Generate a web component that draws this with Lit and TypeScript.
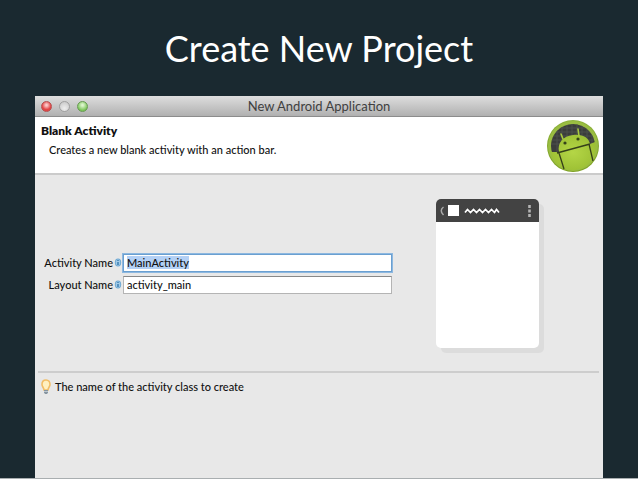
import { LitElement, html, css, svg } from "lit";
import { customElement, query } from "lit/decorators.js";

const androidLogo = svg`
  <defs>
    <linearGradient id="rim" x1="0" y1="0" x2="0" y2="1">
      <stop offset="0" stop-color="#8db23c"></stop>
      <stop offset="1" stop-color="#7ea022"></stop>
    </linearGradient>
    <radialGradient id="skin" cx="0.5" cy="0.5" r="0.6">
      <stop offset="0" stop-color="#b4d646"></stop>
      <stop offset="1" stop-color="#9abd32"></stop>
    </radialGradient>
    <clipPath id="disc"><circle cx="26" cy="26" r="22"></circle></clipPath>
  </defs>
  <circle cx="26" cy="26" r="26" fill="url(#rim)"></circle>
  <circle cx="26" cy="26" r="25" fill="#9abd42"></circle>
  <g clip-path="url(#disc)">
    <path d="M0 0H52V22L8 33H0Z" fill="#3b3d3b"></path>
    <path d="M2 12H50M2 16H50M2 20H50M2 24H50M2 8H50M10 2V34M15 2V34M20 2V34M25 2V34M30 2V34M35 2V34M40 2V34M45 2V34" stroke="#4d504c" stroke-width="1"></path>
  </g>
  <path d="M4 32L12 32C10 23 16 16 26 15C36 14 42 18 43 24L48 22C51 40 38 50 26 50C15 50 5 43 4 32Z" fill="url(#skin)"></path>
  <path d="M16 19L14 14M32 16L31 9" stroke="#a9cb3f" stroke-width="1.6" stroke-linecap="round"></path>
  <path d="M10 33L43 24M12 33L17 49M42 24L46 41" stroke="#35401a" stroke-width="1.3" fill="none"></path>
  <circle cx="18" cy="23" r="1.6" fill="#34421a"></circle>
  <circle cx="31" cy="19" r="1.6" fill="#34421a"></circle>
`;

@customElement("info-mark")
class InfoMark extends LitElement {
  static styles = css`
    :host { display: block; width: 8px; height: 9px; }
    svg { display: block; }
  `;
  render() {
    return html`<svg width="8" height="9" viewBox="0 0 8 9" aria-hidden="true">
      <ellipse cx="4" cy="4.5" rx="3.2" ry="4" fill="#6fa9d3"></ellipse>
      <ellipse cx="4" cy="4.5" rx="2.2" ry="3" fill="#a3cbe8"></ellipse>
      <path d="M4 2V3M4 4V7" stroke="#2c72a8" stroke-width="1.3"></path>
    </svg>`;
  }
}

@customElement("phone-preview")
class PhonePreview extends LitElement {
  static styles = css`
    :host {
      display: block;
      width: 103px;
      height: 149px;
      background: #fff;
      border-radius: 5px;
      box-shadow: 5px 5px 0 #dcdcdc;
    }
    .bar {
      display: block;
      width: 103px;
      height: 23px;
      background: #434343;
      border-radius: 5px 5px 0 0;
    }
  `;
  render() {
    return html`<svg class="bar" viewBox="0 0 103 23" aria-hidden="true">
      <path d="M7.5 8C4.5 10 4.5 13 7.5 16" stroke="#aaa" stroke-width="1.5" fill="none"></path>
      <rect x="12" y="6" width="11" height="11" fill="#fff"></rect>
      <path d="M29 13.5L31.5 10.5L34.5 13.5L37.5 10.5L40.5 13.5L43.5 10.5L46.5 13.5L49.5 10.5L52.5 13.5L55.5 10.5L58.5 13.5L60.5 10.5L63 13.5" stroke="#fff" stroke-width="1.7" fill="none"></path>
      <path d="M93.5 6V9M93.5 10.5V13.5M93.5 15V18" stroke="#b5b5b5" stroke-width="2.6"></path>
    </svg>`;
  }
}

@customElement("app-root")
class AppRoot extends LitElement {
  @query("#activity") activity!: HTMLInputElement;

  static styles = css`
    :host {
      display: flex;
      flex-direction: column;
      box-sizing: border-box;
      min-height: 100vh;
      background: #1a2930;
      border-bottom: 1px solid #a9aeb0;
      font-family: "Lato", sans-serif;
      font-size: 11px;
      line-height: 16px;
      font-weight: 500;
      color: #111;
    }
    .slide-title {
      margin: 0;
      padding: 24px 0;
      font-size: 36px;
      line-height: 48px;
      font-weight: 400;
      text-align: center;
      color: #fff;
    }
    .window {
      flex: 1;
      display: flex;
      flex-direction: column;
      margin: 0 35px;
      background: #e8e8e8;
    }
    .titlebar {
      display: grid;
      grid-template-columns: 1fr auto 1fr;
      align-items: center;
      height: 21px;
      box-sizing: border-box;
      padding: 0 6px;
      background: linear-gradient(#dedede, #b0b0b0);
      border-bottom: 1px solid #8c8c8c;
    }
    .lights { display: flex; gap: 7px; }
    .light {
      width: 11px;
      height: 11px;
      padding: 0;
      box-sizing: border-box;
      border: 1px solid;
      border-radius: 50%;
    }
    .close { border-color: #b45050; background: radial-gradient(circle at 50% 35%, #fbc8c8 10%, #e24444 60%); }
    .minimize { border-color: #a0a0a0; background: radial-gradient(circle at 50% 70%, #eee, #c4c4c4); }
    .zoom { border-color: #679a52; background: radial-gradient(circle at 50% 35%, #dcf5cc 10%, #7ac458 70%); }
    .window-title { margin: 0; font-size: 13px; font-weight: 400; color: #404040; }
    .header {
      display: flex;
      justify-content: space-between;
      align-items: flex-start;
      height: 58px;
      box-sizing: border-box;
      padding: 3px 4px 0 6px;
      background: #fff;
      border-bottom: 2px solid #cbcbcb;
    }
    .heading { margin: 3px 0; font-size: 12px; line-height: 16px; font-weight: 800; color: #111; }
    .intro { margin: 0; padding-left: 8px; }
    .logo { display: block; width: 52px; height: 52px; }
    .content {
      display: flex;
      justify-content: space-between;
      align-items: center;
      gap: 44px;
      padding: 24px 64px 23px 8px;
    }
    .form {
      flex: 1;
      display: grid;
      grid-template-columns: 70px 8px 1fr;
      align-items: center;
      column-gap: 1px;
      row-gap: 4px;
      margin: 0;
    }
    label { text-align: right; }
    input {
      width: 100%;
      height: 18px;
      min-width: 0;
      box-sizing: border-box;
      padding: 0 3px;
      border: 1px solid #b4b4b4;
      border-top-color: #888;
      border-radius: 0;
      background: #fff;
      color: #111;
      font: inherit;
      outline: none;
    }
    input.active {
      border-color: #6a9fd0;
      box-shadow: 0 0 0 1px #8db8e0;
    }
    input::selection { background: #b3d0f5; color: #111; }
    .hint {
      display: flex;
      align-items: flex-start;
      gap: 4px;
      margin: 0 4px 0 3px;
      padding: 6px 3px;
      border-top: 2px solid #cdcdcd;
    }
    .hint p { margin: 0; }
    .bulb { display: block; width: 10px; height: 16px; }
  `;

  firstUpdated() {
    this.activity.focus();
    this.activity.select();
  }

  render() {
    return html`
      <h1 class="slide-title">Create New Project</h1>
      <section class="window" aria-label="New Android Application">
        <div class="titlebar">
          <div class="lights">
            <button class="light close" aria-label="Close"></button>
            <button class="light minimize" aria-label="Minimize"></button>
            <button class="light zoom" aria-label="Zoom"></button>
          </div>
          <h2 class="window-title">New Android Application</h2>
        </div>
        <header class="header">
          <div>
            <h3 class="heading">Blank Activity</h3>
            <p class="intro">Creates a new blank activity with an action bar.</p>
          </div>
          <svg class="logo" viewBox="0 0 52 52" aria-hidden="true">${androidLogo}</svg>
        </header>
        <div class="content">
          <form class="form">
            <label for="activity">Activity Name</label>
            <info-mark></info-mark>
            <input id="activity" class="active" type="text" .value=${"MainActivity"} />
            <label for="layout">Layout Name</label>
            <info-mark></info-mark>
            <input id="layout" type="text" .value=${"activity_main"} />
          </form>
          <phone-preview></phone-preview>
        </div>
        <footer class="hint">
          <svg class="bulb" viewBox="0 0 10 16" aria-hidden="true">
            <path d="M5 1C2.3 1 1 3 1 5.5C1 8 3 8.5 3 11H7C7 8.5 9 8 9 5.5C9 3 7.7 1 5 1Z" fill="#fff0c0" stroke="#f2bd66" stroke-width="1.6"></path>
            <path d="M3 11H7V13.5L6 15H4L3 13.5Z" fill="#8795a0"></path>
            <path d="M3 12.5H7" stroke="#cdd6dc" stroke-width="0.8"></path>
          </svg>
          <p>The name of the activity class to create</p>
        </footer>
      </section>
    `;
  }
}
